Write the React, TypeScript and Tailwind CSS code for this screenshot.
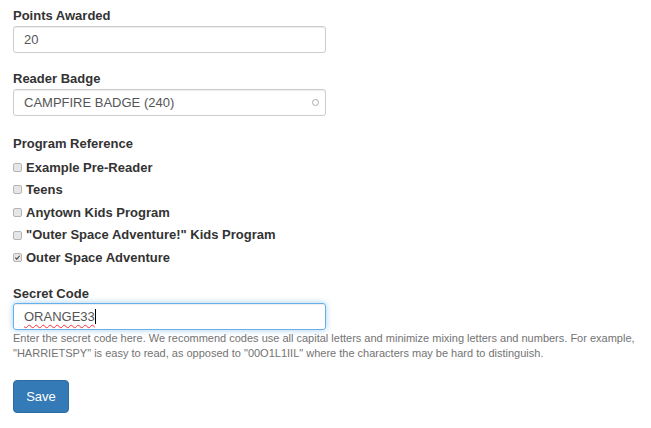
import React from 'react';

const programs = [
  { label: 'Example Pre-Reader', checked: false },
  { label: 'Teens', checked: false },
  { label: 'Anytown Kids Program', checked: false },
  { label: '"Outer Space Adventure!" Kids Program', checked: false },
  { label: 'Outer Space Adventure', checked: true },
];

const Box = ({ checked }: { checked: boolean }) => (
  <span className="flex h-[9px] w-[9px] items-center justify-center rounded-[2px] border border-[#b5b5b5] bg-[#e6e6e6]">
    {checked && (
      <svg viewBox="0 0 8 8" className="h-[7px] w-[7px]">
        <path d="M1.5 4.2 L3.2 5.8 L6.5 2" fill="none" stroke="#444" strokeWidth="1.3" />
      </svg>
    )}
  </span>
);

const App = () => {
  return (
    <div className="h-[428px] w-[651px] bg-white pl-[13px] pt-[7px] font-['Liberation_Sans',Arial,sans-serif] text-[#333]">
      {/* Points */}
      <div className="text-[13px] font-bold leading-[18px]">Points Awarded</div>
      <div className="mt-[1px] flex h-[27px] w-[313px] items-center rounded-[3px] border border-[#ccc] px-[10px] text-[13px] text-[#555] shadow-[inset_0_1px_1px_rgba(0,0,0,0.075)]">
        20
      </div>

      {/* Badge */}
      <div className="mt-[17px] text-[13px] font-bold leading-[18px]">Reader Badge</div>
      <div className="mt-[1px] flex h-[27px] w-[313px] items-center justify-between rounded-[3px] border border-[#ccc] pl-[10px] pr-[6px] text-[13px] text-[#555] shadow-[inset_0_1px_1px_rgba(0,0,0,0.075)]">
        <span>CAMPFIRE BADGE (240)</span>
        <span className="h-[7px] w-[7px] rounded-full border border-[#aaa]" />
      </div>

      {/* Programs */}
      <div className="mt-[19px] text-[13px] font-bold leading-[18px]">Program Reference</div>
      <div className="mt-[3px] flex flex-col">
        {programs.map((p, i) => (
          <div key={i} className="flex h-[22.6px] items-center gap-[4px] text-[13px] font-bold">
            <Box checked={p.checked} />
            <span>{p.label}</span>
          </div>
        ))}
      </div>

      {/* Secret code */}
      <div className="mt-[16px] text-[13px] font-bold leading-[18px]">Secret Code</div>
      <div className="flex h-[27px] w-[313px] items-center rounded-[3px] border border-[#66afe9] px-[10px] text-[13px] text-[#555] shadow-[inset_0_1px_1px_rgba(0,0,0,0.075),0_0_6px_rgba(102,175,233,0.6)]">
        <span className="underline decoration-red-500 decoration-wavy decoration-1 underline-offset-[3px]">ORANGE33</span>
        <span className="h-[15px] w-px bg-black" />
      </div>
      <p className="mt-[1px] w-[635px] text-[11px] leading-[15px] text-[#737373]">
        Enter the secret code here. We recommend codes use all capital letters and minimize mixing letters and numbers. For example, "HARRIETSPY" is easy to read, as opposed to "00O1L1IIL" where the characters may be hard to distinguish.
      </p>

      <button className="mt-[19px] h-[33px] w-[56px] rounded-[4px] border border-[#2e6da4] bg-[#337ab7] text-[13px] text-white">
        Save
      </button>
    </div>
  );
};

export default App;
